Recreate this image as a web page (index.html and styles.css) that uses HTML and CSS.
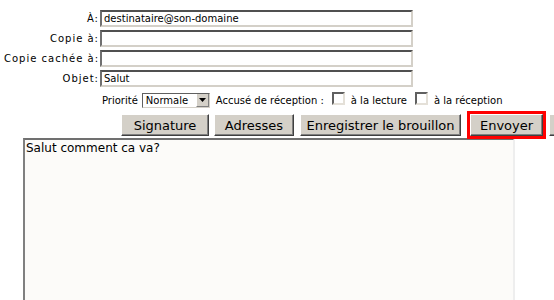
FILE: index.html
```html
<!DOCTYPE html>
<html lang="fr">
<head>
    <meta charset="UTF-8">
    <title>Nouveau message</title>
    <link rel="stylesheet" href="styles.css">
</head>
<body>
    <form class="compose">
        <div class="fields">
            <div class="row">
                <label for="to">À:</label>
                <input type="text" id="to" value="destinataire@son-domaine">
            </div>
            <div class="row">
                <label for="cc">Copie à:</label>
                <input type="text" id="cc">
            </div>
            <div class="row">
                <label for="bcc">Copie cachée à:</label>
                <input type="text" id="bcc">
            </div>
            <div class="row">
                <label for="subject">Objet:</label>
                <input type="text" id="subject" value="Salut">
            </div>
        </div>
        <div class="options">
            <span>Priorité</span>
            <span class="select">
                <span class="select-value">Normale</span>
                <span class="select-arrow">
                    <svg width="7" height="4" viewBox="0 0 7 4"><path d="M0 0h7L3.5 4z" fill="#000"/></svg>
                </span>
            </span>
            <span>Accusé de réception :</span>
            <input type="checkbox" class="check">
            <span>à la lecture</span>
            <input type="checkbox" class="check">
            <span>à la réception</span>
        </div>
        <div class="buttons">
            <button type="button" class="btn btn-sig">Signature</button>
            <button type="button" class="btn btn-addr">Adresses</button>
            <button type="button" class="btn btn-draft">Enregistrer le brouillon</button>
            <button type="button" class="btn btn-send">Envoyer</button>
            <button type="button" class="btn btn-more"></button>
        </div>
        <textarea class="body-text">Salut comment ca va?</textarea>
    </form>
</body>
</html>
```

FILE: styles.css
```css
body {
    margin: 0;
    background-color: #ffffff;
    font-family: "DejaVu Sans", Verdana, sans-serif;
    font-size: 10px;
    color: #000;
    overflow: hidden;
}
.fields {
    padding-top: 10px;
}
.row {
    display: flex;
    height: 17px;
    margin-bottom: 3px;
}
.row label {
    width: 99px;
    padding-right: 0;
    text-align: right;
    line-height: 17px;
    letter-spacing: 1px;
    white-space: nowrap;
}
.row input {
    box-sizing: border-box;
    width: 313px;
    height: 17px;
    margin: 0 0 0 1px;
    padding: 0 2px;
    border: 2px solid;
    border-color: #505050 #d4d0c8 #d4d0c8 #707070;
    font-family: "DejaVu Sans", Verdana, sans-serif;
    font-size: 10px;
    background: #fff;
}
.options {
    display: flex;
    align-items: center;
    gap: 4px;
    height: 16px;
    margin-top: 5px;
    padding-left: 102px;
}
.select {
    display: inline-flex;
    box-sizing: border-box;
    width: 68px;
    height: 15px;
    border: 1px solid;
    border-color: #606060 #d4d0c8 #d4d0c8 #606060;
    background: #fff;
    margin-right: 2px;
}
.select-value {
    flex: 1;
    padding-left: 3px;
    line-height: 13px;
}
.select-arrow {
    display: flex;
    align-items: center;
    justify-content: center;
    width: 13px;
    background: #d4d0c8;
    border-left: 1px solid #fff;
    border-right: 1px solid #808080;
    border-bottom: 1px solid #808080;
    box-sizing: border-box;
}
.check {
    appearance: none;
    box-sizing: border-box;
    width: 13px;
    height: 13px;
    margin: -3px 2px 0 4px;
    border: 2px solid;
    border-color: #606060 #e4e0d8 #e4e0d8 #606060;
    background: #fff;
}
.buttons {
    display: flex;
    gap: 5px;
    margin-top: 6px;
    padding-left: 121px;
}
.btn {
    flex-shrink: 0;
    box-sizing: border-box;
    height: 22px;
    padding: 0;
    border: 1px solid;
    border-color: #ffffff #404040 #404040 #ffffff;
    box-shadow: inset -1px -1px #808080;
    background: #d4d0c8;
    font-family: "DejaVu Sans", Verdana, sans-serif;
    font-size: 13px;
    color: #000;
}
.btn-sig {
    width: 88px;
}
.btn-addr {
    width: 80px;
    margin-right: 1px;
}
.btn-draft {
    width: 161px;
    margin-right: 4px;
}
.btn-send {
    width: 73px;
    outline: 3px solid #ff0000;
    margin-right: 1px;
}
.btn-more {
    width: 40px;
}
.body-text {
    display: block;
    box-sizing: border-box;
    width: 492px;
    height: 200px;
    margin: 2px 0 0 23px;
    padding: 1px 1px;
    border: 2px solid;
    border-color: #707070 #eeeeee #eeeeee #808080;
    background: #fcfbf9;
    font-family: "DejaVu Sans", Verdana, sans-serif;
    font-size: 12px;
    resize: none;
}
```
